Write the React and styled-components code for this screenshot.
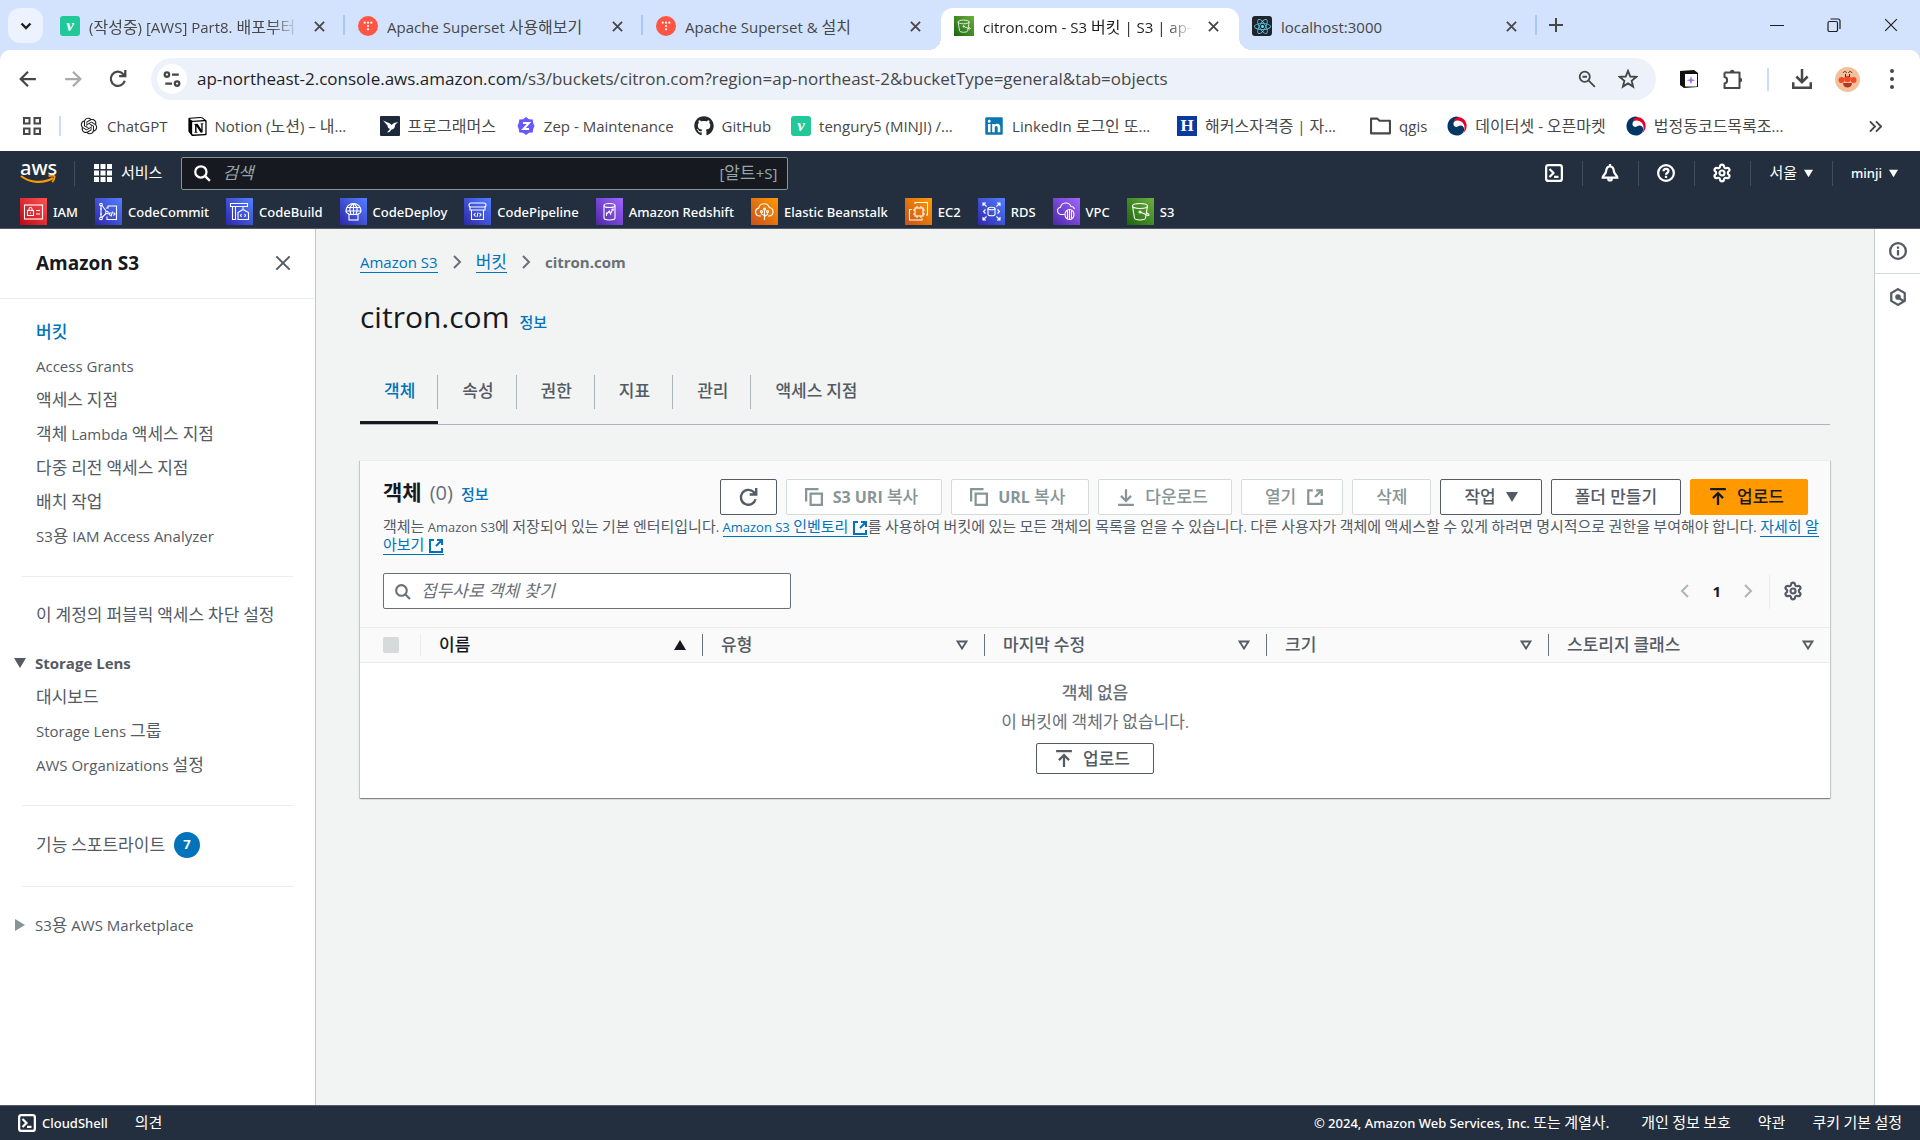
import React, { useState } from 'react'
import styled, { createGlobalStyle, css } from 'styled-components'
import { Settings } from 'lucide-react'
import { FaGithub, FaReact, FaLinkedin } from 'react-icons/fa'
import { SiNotion } from 'react-icons/si'
import { RiOpenaiFill } from 'react-icons/ri'

const HANGUL = /([\uAC00-\uD7A3]+)/

// Hangul is set a little larger than the latin text beside it
const Mixed = ({ children }) => (
    <span>
        {children.split(HANGUL).filter(Boolean).map((part, i) =>
            HANGUL.test(part) ? <Ko key={i}>{part}</Ko> : part
        )}
    </span>
)

const browserTabs = [
    { title: "(작성중) [AWS] Part8. 배포부터", icon: "velog", faded: true },
    { title: "Apache Superset 사용해보기", icon: "tistory" },
    { title: "Apache Superset & 설치", icon: "tistory" },
    { title: "citron.com - S3 버킷 | S3 | ap-", icon: "s3", faded: true, active: true },
    { title: "localhost:3000", icon: "react" },
]

const bookmarks = [
    { title: "ChatGPT", icon: "openai" },
    { title: "Notion (노션) – 내...", icon: "notion", full: true },
    { title: "프로그래머스", icon: "programmers" },
    { title: "Zep - Maintenance", icon: "zep" },
    { title: "GitHub", icon: "github" },
    { title: "tengury5 (MINJI) /...", icon: "velog", full: true },
    { title: "LinkedIn 로그인 또...", icon: "linkedin", full: true },
    { title: "해커스자격증 | 자...", icon: "hackers", full: true },
    { title: "qgis", icon: "folder" },
    { title: "데이터셋 - 오픈마켓", icon: "gov" },
    { title: "법정동코드목록조...", icon: "gov" },
]

const services = [
    { name: "IAM", from: "#bd0816", to: "#ff5252" },
    { name: "CodeCommit", from: "#2e27ad", to: "#527fff" },
    { name: "CodeBuild", from: "#2e27ad", to: "#527fff" },
    { name: "CodeDeploy", from: "#2e27ad", to: "#527fff" },
    { name: "CodePipeline", from: "#2e27ad", to: "#527fff" },
    { name: "Amazon Redshift", from: "#4d27a8", to: "#a166ff" },
    { name: "Elastic Beanstalk", from: "#c8511b", to: "#ff9900" },
    { name: "EC2", from: "#c8511b", to: "#ff9900" },
    { name: "RDS", from: "#2e27ad", to: "#527fff" },
    { name: "VPC", from: "#4d27a8", to: "#a166ff" },
    { name: "S3", from: "#1b660f", to: "#6cae3e" },
]

const bucketLinks = [
    "버킷",
    "Access Grants",
    "액세스 지점",
    "객체 Lambda 액세스 지점",
    "다중 리전 액세스 지점",
    "배치 작업",
    "S3용 IAM Access Analyzer",
]

const lensLinks = ["대시보드", "Storage Lens 그룹", "AWS Organizations 설정"]

const tabs = ["객체", "속성", "권한", "지표", "관리", "액세스 지점"]

const columns = ["이름", "유형", "마지막 수정", "크기", "스토리지 클래스"]

/* ---------- icons ---------- */

const glyphs = {
    IAM: <><rect x="4.5" y="7" width="18" height="14" /><rect x="7.5" y="12.5" width="6" height="5" /><path d="M9 12.500V11a1.500 1.500 0 0 1 3 0v1.500M10.500 14.500v1M16 12.500h4M16 16h4" /></>,
    CodeCommit: <><circle cx="6" cy="6.500" r="1.300" /><circle cx="6" cy="20.500" r="1.300" /><circle cx="12" cy="14.500" r="1.300" /><path d="M6 8v11M7 7.500l4.500 6M7 19.500l4-4M5 11h2M5 16h2M11 10h2V8h8.500v13.500H12v-3M17.500 13.500l-1.500 5M15.500 14.500L14 16l1.500 1.500M18.500 14.500L20 16l-1.500 1.500" /></>,
    CodeBuild: <><path d="M4.500 5.500h17v3h-17zM6.500 8.500v13h3v-13M17 8.500v3M12 21.500v-7l5-3 5.500 3v7zM15.500 16l-1 1.500 1 1.500M18.500 16l1 1.500-1 1.500" /></>,
    CodeDeploy: <><path d="M6 13a7.500 7.500 0 0 1 15 0zM6 13c0 2 2.500 3 4 3.500h7c1.500-.5 4-1.500 4-3.500M13.500 5.500c-3 2-4 5-3.500 7.500l1 3.500M13.500 5.500c3 2 4 5 3.500 7.500l-1 3.500M13.500 5.500v11M7 9.500h13" /><rect x="9" y="16.500" width="9" height="5.500" /></>,
    CodePipeline: <><rect x="5" y="5" width="17" height="4" rx="2" /><path d="M6 9v3h15V9M7.500 12v9.500h12V12M11.500 15L10 16.800l1.500 1.700M15.500 15l1.500 1.800-1.500 1.700M14 14.500l-1 4.500" /></>,
    "Amazon Redshift": <><ellipse cx="13.500" cy="7.500" rx="5.500" ry="2" /><path d="M8 7.500v12.500c0 2.600 11 2.600 11 0V7.500M10.500 18v-3.500M10.500 16l3-3 1 3 2-4.500M15.500 11.500l1.500-.5.5 1.500" /></>,
    "Elastic Beanstalk": <><path d="M10 18H8.500a4 4 0 0 1-.8-7.900 5.500 5.500 0 0 1 10.600-.6A4.300 4.300 0 0 1 18.500 18H17M13.500 22V12M13.500 17.500l-3-1.500v-2M13.500 18.500l3-2v-2" /><circle cx="13.500" cy="11" r="1" /><circle cx="10.500" cy="13.500" r="1" /><circle cx="16.500" cy="13.500" r="1" /></>,
    EC2: <><rect x="10" y="10" width="8" height="8" /><path d="M12 10V8M16 10V8M12 20v-2M16 20v-2M10 12H8M10 16H8M20 12h-2M20 16h-2M10 6V4.500h12.500V17H21M7 11.500H4.500V22h12.500v-1.500" /></>,
    RDS: <><ellipse cx="13.500" cy="10.500" rx="3.500" ry="1.200" /><path d="M10 10.500v6c0 1.600 7 1.600 7 0v-6M5 8V5h3M5 5l3.500 3.500M22 8V5h-3M22 5l-3.500 3.500M5 19v3h3M5 22l3.500-3.500M22 19v3h-3M22 22l-3.500-3.500M7.500 11.500l-2 2 2 2M19.500 11.500l2 2-2 2" /></>,
    VPC: <><path d="M11.500 16.500H8a3.700 3.700 0 0 1-.5-7.300 5.500 5.500 0 0 1 10.500-.7 3.500 3.500 0 0 1 3.500 2.500" /><ellipse cx="16.500" cy="16.500" rx="4.500" ry="5" /><path d="M16.500 11.500v10M14.500 12.500v8M18.500 12.500v8" /></>,
    S3: <><ellipse cx="13" cy="8" rx="7.500" ry="2.500" /><path d="M5.500 8l2 12c.3 2.600 10.700 2.600 11 0l2-12M13 14l8 3.500c1.500.3 1.500-1.500-1-2.500" /><circle cx="13" cy="14" r="1" /></>,
}

const ServiceIcon = ({ service, size = 27 }) => (
    <ServiceTile $from={service.from} $to={service.to} $size={size}>
        <svg viewBox="0 0 27 27" width={size} height={size} fill="none" stroke="#fff" strokeWidth="1.1">
            {glyphs[service.name]}
        </svg>
    </ServiceTile>
)

const Line = ({ size = 18, width = 2, box = 16, children, ...rest }) => (
    <svg width={size} height={size} viewBox={`0 0 ${box} ${box}`} fill="none" stroke="currentColor" strokeWidth={width} aria-hidden="true" {...rest}>
        {children}
    </svg>
)

const CloseIcon = ({ size = 11, width = 2 }) => <Line size={size} width={width} box={12}><path d="M1 1l10 10M11 1L1 11" /></Line>
const SearchIcon = ({ size = 18 }) => <Line size={size}><circle cx="7" cy="7" r="5" /><path d="M11 11l4 4" /></Line>
const ShellIcon = () => <Line><rect x="1" y="1" width="14" height="14" rx="2" /><path d="M4 4.500L7.500 8 4 11.500M8 11.500h4" /></Line>
const BellIcon = () => <Line><path d="M8 0v2M8 2c-2.500 0-3.300 2.500-3.500 4.500C4.300 9 1.500 10 1.500 12h13c0-2-2.800-3-3-5.500C11.300 4.500 10.500 2 8 2zM6.500 12v1.500c0 1.500 3 1.500 3 0V12" /></Line>
const HelpIcon = () => <Line><circle cx="8" cy="8" r="7" /><path d="M5.800 6.500C5.800 3.500 10.200 3.700 10.200 6.300 10.200 8 8 8 8 9.500M8 10.500v2" /></Line>
const GearIcon = () => <Settings size={20} strokeWidth={2.6} aria-hidden="true" />
const InfoIcon = () => <Line><circle cx="8" cy="8" r="7" /><path d="M8 12V7M8 6V4" /></Line>
const HexIcon = () => <Line><path d="M8 1l6 3.500v7L8 15l-6-3.500v-7zM9 9l4.500 3" /><circle cx="8" cy="8" r="1.500" fill="currentColor" /></Line>
const RefreshIcon = ({ size = 18 }) => <Line size={size}><path d="M14 9.500A6.300 6.300 0 1 1 12.500 3.500L14 5M14.500 0v5.500H9" /></Line>
const CopyIcon = () => <Line><path d="M1 12V1h11" /><rect x="5" y="5" width="10" height="10" /></Line>
const DownloadIcon = () => <Line><path d="M1 15h14M8 1v10M3.500 7L8 11.500 12.500 7" /></Line>
const UploadIcon = () => <Line><path d="M1 1h14M8 15V5M3.500 9L8 4.500 12.500 9" /></Line>
const ExternalIcon = ({ size = 16 }) => <Line size={size}><path d="M6 2H2v12h12v-4M9 2h5v5M14 2L8 8" /></Line>
const ChevronIcon = ({ left }) => <Line size={16}><path d={left ? "M11 2L5 8l6 6" : "M5 2l6 6-6 6"} /></Line>
const Caret = ({ size = 12 }) => <svg width={size} height={size} viewBox="0 0 12 12" aria-hidden="true"><path d="M0 1h12L6 11z" fill="currentColor" /></svg>

const SiteIcon = ({ name }) => {
    switch (name) {
        case "velog":
            return <Favicon $bg="#20c997" $radius={3}>v</Favicon>
        case "tistory":
            return (
                <svg width="20" height="20" viewBox="0 0 20 20">
                    <circle cx="10" cy="10" r="10" fill="#ff5544" />
                    <g fill="#fff"><circle cx="6.700" cy="6.700" r="1.100" /><circle cx="10" cy="6.700" r="1.100" /><circle cx="13.300" cy="6.700" r="1.100" /><circle cx="10" cy="10" r="1.100" /><circle cx="10" cy="13.300" r="1.100" /></g>
                </svg>
            )
        case "s3":
            return <ServiceIcon service={services[10]} size={20} />
        case "react":
            return <ReactTile><FaReact size={17} /></ReactTile>
        case "openai":
            return <RiOpenaiFill size={20} color="#222" />
        case "notion":
            return <SiNotion size={19} color="#000" />
        case "programmers":
            return (
                <svg width="20" height="20" viewBox="0 0 20 20">
                    <rect width="20" height="20" rx="1" fill="#1e2a3c" />
                    <path d="M3 4.500l7 3 1.500 1.500 2.500-2 4-1-3 3c0 3.500-2 4.500-3.500 4.500L9.500 16 7 16.500l3-3.500c-2-1-2.500-2-2.500-3.500z" fill="#fff" />
                </svg>
            )
        case "zep":
            return (
                <svg width="20" height="20" viewBox="0 0 20 20">
                    <path d="M10 1l3 2.200 3.700.3.600 3.700 1.200 2.800-1.200 2.800-.6 3.700-3.700.3L10 19l-3-2.200-3.700-.3-.6-3.700L1.500 10l1.200-2.800.6-3.700L7 3.200z" fill="#6758ff" />
                    <path d="M7 7h6l-5.500 6H13" fill="none" stroke="#fff" strokeWidth="2" />
                </svg>
            )
        case "github":
            return <FaGithub size={20} color="#24292f" />
        case "linkedin":
            return <FaLinkedin size={20} color="#0a76b4" />
        case "hackers":
            return <Favicon $bg="#0b3a9e" $upright>H</Favicon>
        case "folder":
            return <Line size={21} width={2} box={20}><path d="M1 16.500v-14h6l2 2h10v12z" strokeLinejoin="round" /></Line>
        default:
            return (
                <svg width="20" height="20" viewBox="0 0 20 20">
                    <path d="M10 .5C4.500.5.500 4.800.5 10.300S4.800 19.500 10 19.500c4 0 7.200-2.700 7.200-6.300 0-3.200-3.400-4.900-6-3-2.700 2-5.700-.6-4.400-3.900C7.800 3.900 10.200 3 12.700 3.200 12.300 1.600 11.500.5 10 .5z" fill="#003764" />
                    <path d="M7.500 3C11.500-.5 17 1.500 19 6.500c1.500 4 .2 8-2.500 10.500 1.500-4 1.500-8-1-10.500C13.200 4.200 10 3.800 7 5.500z" fill="#e4002b" />
                </svg>
            )
    }
}

/* ---------- browser ---------- */

const Browser = () => (
    <header>
        <TabStrip>
            <TabSearch type="button" aria-label="탭 검색">
                <Line size={12} width={2.4} box={12}><path d="M1.500 3.500L6 8l4.500-4.500" /></Line>
            </TabSearch>
            {browserTabs.map((tab, i) => (
                <BrowserTab key={i} $active={tab.active} $divider={!tab.active && i !== 2}>
                    <SiteIcon name={tab.icon} />
                    <TabTitle $faded={tab.faded}><Mixed>{tab.title}</Mixed></TabTitle>
                    <BareButton type="button" aria-label="탭 닫기"><CloseIcon /></BareButton>
                </BrowserTab>
            ))}
            <NewTab type="button" aria-label="새 탭"><Line size={14} box={14}><path d="M7 0v14M0 7h14" /></Line></NewTab>
            <WindowButtons>
                <BareButton type="button" aria-label="최소화"><Line size={14} width={1} box={14}><path d="M0 7.500h14" /></Line></BareButton>
                <BareButton type="button" aria-label="복원"><Line size={14} width={1.2} box={14}><rect x="1" y="3.500" width="9.500" height="10" rx="1.500" /><path d="M3.500 1h7.500a2 2 0 0 1 2 2v8" /></Line></BareButton>
                <BareButton type="button" aria-label="닫기"><CloseIcon size={14} width={1} /></BareButton>
            </WindowButtons>
        </TabStrip>
        <Toolbar>
            <BareButton type="button" aria-label="뒤로"><Line><path d="M15 8H2M8 1.500L1.500 8 8 14.500" /></Line></BareButton>
            <BareButton type="button" aria-label="앞으로" $color="#a8a9aa"><Line><path d="M1 8h13M8 1.500L14.500 8 8 14.500" /></Line></BareButton>
            <BareButton type="button" aria-label="새로고침"><RefreshIcon /></BareButton>
            <Omnibox>
                <SiteInfo type="button" aria-label="사이트 정보">
                    <Line><circle cx="3.500" cy="4" r="2" /><path d="M8 4h6M2 12h6" /><circle cx="12.500" cy="12" r="2" /></Line>
                </SiteInfo>
                <Url><b>ap-northeast-2.console.aws.amazon.com</b>/s3/buckets/citron.com?region=ap-northeast-2&amp;bucketType=general&amp;tab=objects</Url>
                <BareButton type="button" aria-label="확대/축소"><Line width={1.6}><circle cx="6" cy="6" r="4.500" /><path d="M9.500 9.500l5.500 5.500M4 6h4" /></Line></BareButton>
                <BareButton type="button" aria-label="북마크 추가"><Line size={20} width={1.5}><path d="M8 1.500l1.800 4.500 4.800.3-3.700 3.100 1.200 4.700L8 11.500l-4.100 2.600 1.200-4.700L1.400 6.300 6.200 6z" /></Line></BareButton>
            </Omnibox>
            <Extensions>
                <BareButton type="button" aria-label="확장 프로그램">
                    <svg width="20" height="20" viewBox="0 0 20 20">
                        <path d="M1 2l14-1 4 3v14l-14 1-4-3z" fill="#111" />
                        <rect x="6" y="5" width="12" height="12.500" fill="#fff" />
                        <path d="M12 7l1 3.200 3.200 1-3.200 1-1 3.200-1-3.200-3.200-1 3.200-1z" fill="#a66bf2" />
                    </svg>
                </BareButton>
                <BareButton type="button" aria-label="확장 프로그램 관리"><Line size={22} width={2} box={22}><path d="M2.500 4.500h6M2.500 4.500v4.500c3.500.5 3.500 6 0 6.500v4.500H17.500V4.500h-9" strokeLinejoin="round" /><path d="M8 4a2.200 2.200 0 0 1 4.400 0zM18 9.800a2.200 2.200 0 0 1 0 4.400z" fill="currentColor" stroke="none" /></Line></BareButton>
                <Rule $color="#c9dcfb" $height={23} />
                <BareButton type="button" aria-label="다운로드"><Line size={20}><path d="M8 0v10M3.500 6L8 10.500 12.500 6M1 10.500V15h14v-4.500" /></Line></BareButton>
                <BareButton type="button" aria-label="프로필">
                    <svg width="25" height="25" viewBox="0 0 25 25">
                        <circle cx="12.500" cy="12.500" r="12.500" fill="#f3c09c" />
                        <g fill="#ee4b2b"><circle cx="12.500" cy="12" r="3.300" /><circle cx="6.500" cy="13" r="3" /><circle cx="18.500" cy="13" r="3" /></g>
                        <path d="M8 16h9c0 6-9 6-9 0z" fill="#b5342a" />
                        <path d="M8 6c1-2 3-2 3.500 0M13.500 6c.5-2 2.500-2 3.500 0M10.500 7v3M14.500 7v3" stroke="#4a2a20" fill="none" />
                    </svg>
                </BareButton>
                <BareButton type="button" aria-label="메뉴"><svg width="18" height="20" viewBox="0 0 18 20" fill="currentColor"><circle cx="9" cy="2" r="2" /><circle cx="9" cy="10" r="2" /><circle cx="9" cy="18" r="2" /></svg></BareButton>
            </Extensions>
        </Toolbar>
        <BookmarkBar>
            <BareButton type="button" aria-label="앱">
                <Line size={18} width={2} box={18}><path d="M1 1h5.500v5.500H1zM11.500 1H17v5.500h-5.500zM1 11.500h5.500V17H1zM11.500 11.500H17V17h-5.500z" /></Line>
            </BareButton>
            <Rule $color="#c9dcfb" $height={20} />
            <BookmarkList>
                {bookmarks.map(item => (
                    <Bookmark key={item.title} href="#">
                        <SiteIcon name={item.icon} />
                        <BookmarkTitle $full={item.full}><Mixed>{item.title}</Mixed></BookmarkTitle>
                    </Bookmark>
                ))}
            </BookmarkList>
            <BareButton type="button" aria-label="더보기"><Line size={13} width={2} box={14}><path d="M1 1.500L6.500 7 1 12.500M7.500 1.500L13 7l-5.500 5.500" /></Line></BareButton>
        </BookmarkBar>
    </header>
)

/* ---------- console ---------- */

const ConsoleHeader = () => (
    <ConsoleBar>
        <ConsoleTop>
            <Logo href="#" aria-label="AWS">
                aws
                <svg width="36" height="10" viewBox="0 0 36 10"><path d="M1 1c9 7 22 8 32 2" fill="none" stroke="#ff9900" strokeWidth="2.2" /><path d="M28.500 1.200c3-.9 5-.8 6 0 .3 1.800-.5 4-2.300 6" fill="none" stroke="#ff9900" strokeWidth="1.700" /></svg>
            </Logo>
            <Rule $color="#414d5c" $height={25} />
            <ServicesButton type="button">
                <svg width="18" height="18" viewBox="0 0 18 18" fill="#fff"><path d="M0 0h5v5H0zM6.500 0h5v5h-5zM13 0h5v5h-5zM0 6.500h5v5H0zM6.500 6.500h5v5h-5zM13 6.500h5v5h-5zM0 13h5v5H0zM6.500 13h5v5h-5zM13 13h5v5h-5z" /></svg>
                <Mixed>서비스</Mixed>
            </ServicesButton>
            <ConsoleSearch>
                <SearchIcon />
                <input type="search" placeholder="검색" />
                <SearchHint><Mixed>[알트+S]</Mixed></SearchHint>
            </ConsoleSearch>
            <ConsoleTools>
                <ToolButton type="button" aria-label="CloudShell"><ShellIcon /></ToolButton>
                <ToolButton type="button" aria-label="알림"><BellIcon /></ToolButton>
                <ToolButton type="button" aria-label="지원"><HelpIcon /></ToolButton>
                <ToolButton type="button" aria-label="설정" $wide><GearIcon /></ToolButton>
                <ToolButton type="button" aria-haspopup="menu"><Mixed>서울</Mixed><Caret size={9} /></ToolButton>
                <ToolButton type="button" aria-haspopup="menu">minji<Caret size={9} /></ToolButton>
            </ConsoleTools>
        </ConsoleTop>
        <Favorites>
            {services.map(service => (
                <a key={service.name} href="#">
                    <ServiceIcon service={service} />
                    {service.name}
                </a>
            ))}
        </Favorites>
    </ConsoleBar>
)

const Sidebar = () => (
    <Side>
        <SideHeader>
            <h2>Amazon S3</h2>
            <BareButton type="button" aria-label="탐색 닫기" $color="#545b64"><CloseIcon size={16} width={1.5} /></BareButton>
        </SideHeader>
        <SideNav>
            <NavList>
                {bucketLinks.map((name, i) => (
                    <li key={name}><NavLink href="#" $active={i === 0}><Mixed>{name}</Mixed></NavLink></li>
                ))}
            </NavList>
            <NavDivider />
            <NavLink href="#"><Mixed>이 계정의 퍼블릭 액세스 차단 설정</Mixed></NavLink>
            <NavGroup type="button" aria-expanded="true" $open><Caret size={12} /><b>Storage Lens</b></NavGroup>
            <NavList>
                {lensLinks.map(name => (
                    <li key={name}><NavLink href="#"><Mixed>{name}</Mixed></NavLink></li>
                ))}
            </NavList>
            <NavDivider />
            <NavLink href="#"><Mixed>기능 스포트라이트</Mixed><Badge>7</Badge></NavLink>
            <NavDivider />
            <NavGroup type="button" aria-expanded="false">
                <svg width="12" height="12" viewBox="0 0 12 12"><path d="M1 0v12l10-6z" fill="#879596" /></svg>
                <Mixed>S3용 AWS Marketplace</Mixed>
            </NavGroup>
        </SideNav>
    </Side>
)

const ObjectsPanel = () => (
    <Card>
        <CardHeader>
            <TitleRow>
                <CardTitle>
                    <h2><Mixed>객체</Mixed></h2>
                    <Count>(0)</Count>
                    <InfoLink href="#"><Mixed>정보</Mixed></InfoLink>
                </CardTitle>
                <Actions>
                    <Button type="button" aria-label="새로고침" $iconOnly><RefreshIcon size={19} /></Button>
                    <Button type="button" disabled $icon><CopyIcon /><Mixed>S3 URI 복사</Mixed></Button>
                    <Button type="button" disabled $icon><CopyIcon /><Mixed>URL 복사</Mixed></Button>
                    <Button type="button" disabled $icon><DownloadIcon /><Mixed>다운로드</Mixed></Button>
                    <Button type="button" disabled $iconRight><Mixed>열기</Mixed><ExternalIcon size={18} /></Button>
                    <Button type="button" disabled><Mixed>삭제</Mixed></Button>
                    <Button type="button" aria-haspopup="menu"><Mixed>작업</Mixed><Caret size={12} /></Button>
                    <Button type="button"><Mixed>폴더 만들기</Mixed></Button>
                    <Button type="button" $icon $primary><UploadIcon /><Mixed>업로드</Mixed></Button>
                </Actions>
            </TitleRow>
            <Description>
                <Mixed>객체는 Amazon S3에 저장되어 있는 기본 엔터티입니다. </Mixed>
                <a href="#"><Mixed>Amazon S3 인벤토리 </Mixed><ExternalIcon /></a>
                <Mixed>를 사용하여 버킷에 있는 모든 객체의 목록을 얻을 수 있습니다. 다른 사용자가 객체에 액세스할 수 있게 하려면 명시적으로 권한을 부여해야 합니다. </Mixed>
                <a href="#"><Mixed>자세히 알아보기 </Mixed><ExternalIcon /></a>
            </Description>
            <FilterRow>
                <Filter>
                    <SearchIcon size={17} />
                    <input type="search" aria-label="객체 찾기" placeholder="접두사로 객체 찾기" />
                </Filter>
                <Pager>
                    <BareButton type="button" disabled aria-label="이전 페이지" $color="#aab7b8"><ChevronIcon left /></BareButton>
                    <b>1</b>
                    <BareButton type="button" disabled aria-label="다음 페이지" $color="#aab7b8"><ChevronIcon /></BareButton>
                </Pager>
                <Rule $color="#eaeded" $height={35} />
                <Preferences>
                    <BareButton type="button" aria-label="기본 설정" $color="#545b64"><GearIcon /></BareButton>
                </Preferences>
            </FilterRow>
        </CardHeader>
        <Table>
            <thead>
                <tr>
                    <SelectCell><input type="checkbox" disabled aria-label="모두 선택" /></SelectCell>
                    {columns.map((name, i) => (
                        <HeadCell key={name} $sorted={i === 0}>
                            <div>
                                <Mixed>{name}</Mixed>
                                {i === 0
                                    ? <svg width="12" height="12" viewBox="0 0 12 12"><path d="M0 11h12L6 1z" fill="#16191f" /></svg>
                                    : <Line size={12} width={1.8} box={12}><path d="M1.500 2.500h9L6 9.500z" /></Line>}
                            </div>
                        </HeadCell>
                    ))}
                </tr>
            </thead>
            <tbody>
                <tr>
                    <EmptyCell colSpan={6}>
                        <b><Mixed>객체 없음</Mixed></b>
                        <p><Mixed>이 버킷에 객체가 없습니다.</Mixed></p>
                        <Button type="button" $icon $small><UploadIcon /><Mixed>업로드</Mixed></Button>
                    </EmptyCell>
                </tr>
            </tbody>
        </Table>
    </Card>
)

const App = () => {
    const [activeTab, setActiveTab] = useState(0)

    return (
        <Page>
            <GlobalStyle />
            <Browser />
            <ConsoleHeader />
            <Body>
                <Sidebar />
                <Main>
                    <Breadcrumbs aria-label="이동 경로">
                        <a href="#">Amazon S3</a>
                        <ChevronIcon />
                        <a href="#"><Mixed>버킷</Mixed></a>
                        <ChevronIcon />
                        <b>citron.com</b>
                    </Breadcrumbs>
                    <Heading>
                        <h1>citron.com</h1>
                        <InfoLink href="#"><Mixed>정보</Mixed></InfoLink>
                    </Heading>
                    <Tabs role="tablist">
                        {tabs.map((name, i) => (
                            <Tab
                                key={name}
                                type="button"
                                role="tab"
                                aria-selected={i === activeTab}
                                $active={i === activeTab}
                                onClick={() => setActiveTab(i)}>
                                <TabLabel><Mixed>{name}</Mixed></TabLabel>
                            </Tab>
                        ))}
                    </Tabs>
                    <ObjectsPanel />
                </Main>
                <ToolPanel>
                    <button type="button" aria-label="정보"><InfoIcon /></button>
                    <button type="button" aria-label="튜토리얼"><HexIcon /></button>
                </ToolPanel>
            </Body>
            <Footer>
                <a href="#"><ShellIcon />CloudShell</a>
                <a href="#"><Mixed>의견</Mixed></a>
                <Copyright><Mixed>© 2024, Amazon Web Services, Inc. 또는 계열사.</Mixed></Copyright>
                <a href="#"><Mixed>개인 정보 보호</Mixed></a>
                <a href="#"><Mixed>약관</Mixed></a>
                <a href="#"><Mixed>쿠키 기본 설정</Mixed></a>
            </Footer>
        </Page>
    )
}

export default App

const GlobalStyle = createGlobalStyle`
    * {
        box-sizing: border-box;
    }

    body {
        --ko-step: 2px;
        margin: 0;
        color: #16191f;
        font-family: "Open Sans", "Noto Sans CJK KR", sans-serif;
        font-size: 15px;
        line-height: 24px;
    }

    a {
        color: inherit;
        text-decoration: none;
    }

    button, input {
        font: inherit;
        color: inherit;
    }

    button {
        cursor: pointer;
    }

    svg {
        flex: none;
        display: block;
    }

    h1, h2, p, ul {
        margin: 0;
        padding: 0;
    }

    input[type="search"] {
        appearance: none;
        flex: 1;
        min-width: 0;
        padding: 0;
        border: none;
        outline: none;
        background: none;
        font-size: 17px;

        &::placeholder {
            color: inherit;
            font-style: italic;
            opacity: 1;
        }
    }
`

const Ko = styled.span`
    font-size: calc(1em + var(--ko-step));
    font-weight: var(--ko-weight, inherit);
    line-height: 1;
`

const Page = styled.div`
    min-height: 100vh;
    display: flex;
    flex-direction: column;
`

const BareButton = styled.button`
    display: flex;
    align-items: center;
    justify-content: center;
    padding: 0;
    border: none;
    background: none;
    color: ${({ $color }) => $color || "#474747"};
`

const Rule = styled.span`
    flex: none;
    width: ${({ $height }) => ($height < 24 ? 2 : 1)}px;
    height: ${({ $height }) => $height}px;
    background-color: ${({ $color }) => $color};
`

const TabStrip = styled.div`
    --ko-step: 1px;
    display: flex;
    align-items: flex-end;
    height: 50px;
    padding-left: 8px;
    background-color: #d3e3fd;
`

const TabSearch = styled.button`
    display: flex;
    align-items: center;
    justify-content: center;
    width: 35px;
    height: 35px;
    margin: 0 4px 7px 0;
    padding: 0;
    border: none;
    border-radius: 12px;
    background-color: #ecf3fe;
    color: #1f1f1f;
`

const BrowserTab = styled.div`
    position: relative;
    display: flex;
    align-items: center;
    gap: 9px;
    width: 298px;
    height: 42px;
    padding: 0 20px 6px 13px;
    color: #474747;

    ${({ $divider }) => $divider && css`
        &:after {
            content: "";
            position: absolute;
            top: 7px;
            right: 0;
            width: 2px;
            height: 20px;
            background-color: #a8c7fa;
        }
    `}

    ${({ $active }) => $active && css`
        border-radius: 12px 12px 0 0;
        background-color: #fff;
        color: #1f1f1f;

        &:before, &:after {
            content: "";
            position: absolute;
            bottom: 0;
            width: 12px;
            height: 12px;
        }

        &:before {
            left: -12px;
            background: radial-gradient(circle at 0 0, transparent 12px, #fff 12px);
        }

        &:after {
            right: -12px;
            background: radial-gradient(circle at 100% 0, transparent 12px, #fff 12px);
        }
    `}
`

const TabTitle = styled.span`
    flex: 1;
    margin-right: 6px;
    padding-top: 2px;
    overflow: hidden;
    white-space: nowrap;
    ${({ $faded }) => $faded && "mask-image: linear-gradient(to left, transparent, #000 28px);"}
`

const NewTab = styled(BareButton)`
    width: 38px;
    height: 50px;
    padding-bottom: 1px;
`

const WindowButtons = styled.div`
    display: flex;
    gap: 43px;
    height: 50px;
    margin-left: auto;
    padding-right: 22px;

    button {
        color: #1f1f1f;
    }
`

const Toolbar = styled.div`
    display: flex;
    align-items: center;
    gap: 27px;
    padding: 8px 19px;
    border-radius: 10px 10px 0 0;
    box-shadow: 0 -10px 0 #d3e3fd;
    background-color: #fff;
`

const Omnibox = styled.div`
    flex: 1;
    display: flex;
    align-items: center;
    gap: 22px;
    height: 42px;
    margin: 0 -4px 0 -3px;
    padding: 0 18px 0 6px;
    border-radius: 21px;
    background-color: #ecf1fa;
`

const SiteInfo = styled(BareButton)`
    width: 30px;
    height: 30px;
    margin-right: -12px;
    border-radius: 15px;
    background-color: #fff;
`

const Url = styled.span`
    flex: 1;
    font-size: 17px;
    color: #474747;

    b {
        font-weight: 400;
        color: #1f1f1f;
    }
`

const Extensions = styled.div`
    display: flex;
    align-items: center;
    gap: 23px;
`

const BookmarkBar = styled.div`
    --ko-step: 1px;
    display: flex;
    align-items: center;
    gap: 18px;
    height: 43px;
    padding: 0 38px 7px 23px;
    background-color: #fff;
`

const BookmarkList = styled.div`
    flex: 1;
    display: flex;
    gap: 20px;
    min-width: 0;
    color: #474747;
`

const Bookmark = styled.a`
    display: flex;
    align-items: center;
    gap: 8px;
    white-space: nowrap;
`

const BookmarkTitle = styled.span`
    ${({ $full }) => $full && "width: 145px;"}
`

const Favicon = styled.span`
    flex: none;
    width: 20px;
    height: 20px;
    border-radius: ${({ $radius }) => $radius || 0}px;
    background-color: ${({ $bg }) => $bg};
    color: #fff;
    font-family: "Liberation Serif", serif;
    font-size: 17px;
    font-style: ${({ $upright }) => ($upright ? "normal" : "italic")};
    font-weight: 700;
    line-height: 20px;
    text-align: center;
`

const ReactTile = styled.span`
    flex: none;
    display: flex;
    align-items: center;
    justify-content: center;
    width: 20px;
    height: 20px;
    border-radius: 3px;
    background-color: #20232a;
    color: #61dafb;
`

const ServiceTile = styled.span`
    flex: none;
    width: ${({ $size }) => $size}px;
    height: ${({ $size }) => $size}px;
    background-image: linear-gradient(45deg, ${({ $from, $to }) => `${$from}, ${$to}`});
`

const ConsoleBar = styled.div`
    border-bottom: 1px solid #545b64;
    background-color: #232f3e;
    color: #fff;
    font-family: "Noto Sans", "Noto Sans CJK KR", sans-serif;
    font-size: 13px;
    font-weight: 500;
    --ko-weight: 400;
`

const ConsoleTop = styled.div`
    display: flex;
    align-items: center;
    height: 44px;
    padding: 0 20px;
`

const Logo = styled.a`
    width: 36px;
    margin-right: 18px;
    font-size: 20px;
    line-height: 14px;
    text-align: center;
`

const ServicesButton = styled.button`
    display: flex;
    align-items: center;
    gap: 9px;
    margin: 0 19px;
    padding: 0;
    border: none;
    background: none;
`

const ConsoleSearch = styled.label`
    flex: 0 1 607px;
    display: flex;
    align-items: center;
    gap: 11px;
    height: 33px;
    padding: 0 10px 0 11px;
    border: 1px solid #879596;
    border-radius: 2px;
    background-color: #16191f;
    font-weight: 400;

    input {
        color: #95a5a6;
    }
`

const SearchHint = styled.span`
    font-size: 15px;
    color: #95a5a6;
`

const ConsoleTools = styled.div`
    display: flex;
    align-items: center;
    margin: 0 -17px 0 auto;
`

const ToolButton = styled.button`
    display: flex;
    align-items: center;
    gap: 7px;
    height: 25px;
    padding: ${({ $wide }) => ($wide ? "0 18px 0 17px" : "0 19px 0 18px")};
    border: none;
    background: none;

    & + & {
        border-left: 1px solid #414d5c;
    }
`

const Favorites = styled.nav`
    display: flex;
    gap: 17px;
    padding: 3px 20px;

    a {
        display: flex;
        align-items: center;
        gap: 6px;
        white-space: nowrap;
    }
`

const Body = styled.div`
    flex: 1;
    display: flex;
    background-color: #f2f3f3;
`

const Side = styled.aside`
    flex: none;
    width: 316px;
    border-right: 1px solid #c6cacb;
    background-color: #fff;
    color: #545b64;
`

const SideHeader = styled.div`
    display: flex;
    align-items: center;
    justify-content: space-between;
    height: 70px;
    padding: 0 24px 2px 36px;
    border-bottom: 1px solid #eaeded;

    h2 {
        font-size: 19px;
        color: #16191f;
    }
`

const SideNav = styled.nav`
    padding: 21px 22px 22px;
`

const NavList = styled.ul`
    list-style: none;
    display: flex;
    flex-direction: column;
    gap: 10px;
`

const NavLink = styled.a`
    display: flex;
    align-items: center;
    min-height: 24px;
    padding-left: 14px;
    white-space: nowrap;
    ${({ $active }) => $active && "color: #0073bb; font-weight: 500;"}
`

const NavDivider = styled.hr`
    margin: 28px 0 26px;
    border: none;
    border-top: 1px solid #eaeded;
`

const NavGroup = styled.button`
    display: flex;
    align-items: center;
    gap: 9px;
    margin-left: -8px;
    padding: 0;
    border: none;
    background: none;
    white-space: nowrap;
    ${({ $open }) => $open && "margin-top: 24px; margin-bottom: 10px;"}
`

const Badge = styled.span`
    width: 26px;
    height: 26px;
    margin-left: 9px;
    border-radius: 13px;
    background-color: #0073bb;
    color: #fff;
    font-size: 13px;
    font-weight: 700;
    text-align: center;
`

const Main = styled.main`
    flex: 1;
    min-width: 0;
    padding: 21px 44px 45px;
`

const Breadcrumbs = styled.nav`
    display: flex;
    align-items: center;
    gap: 11px;
    color: #687078;

    a {
        border-bottom: 1px solid #0073bb;
        color: #0073bb;
        line-height: 20px;
    }
`

const Heading = styled.div`
    display: flex;
    align-items: baseline;
    gap: 10px;
    margin-top: 23px;

    h1 {
        font-size: 30px;
        font-weight: 400;
        line-height: 40px;
    }
`

const InfoLink = styled.a`
    --ko-weight: 500;
    color: #0073bb;
    font-size: 13px;
    font-weight: 700;
`

const Tabs = styled.div`
    display: flex;
    margin: 38px 0 35px;
    border-bottom: 1px solid #aab7b8;
`

const Tab = styled.button`
    --ko-weight: 500;
    padding: 0 0 12px;
    border: none;
    border-bottom: 3px solid ${({ $active }) => ($active ? "#16191f" : "transparent")};
    background: none;
    color: ${({ $active }) => ($active ? "#0073bb" : "#545b64")};
    font-weight: 700;
    white-space: nowrap;
`

const TabLabel = styled.span`
    display: block;
    padding: 4px 22px 6px 24px;
    border-right: 1px solid #aab7b8;

    ${Tab}:last-child & {
        border-right: none;
    }
`

const Card = styled.section`
    border-top: 1px solid #eaeded;
    background-color: #fff;
    box-shadow: 0 1px 1px 0 rgba(0, 28, 36, 0.3), 1px 1px 1px 0 rgba(0, 28, 36, 0.15), -1px 1px 1px 0 rgba(0, 28, 36, 0.15);
`

const CardHeader = styled.div`
    padding: 18px 22px 18px 23px;
    border-bottom: 1px solid #eaeded;
    background-color: #fafafa;
`

const TitleRow = styled.div`
    display: flex;
    justify-content: space-between;
`

const CardTitle = styled.div`
    display: flex;
    align-items: baseline;
    gap: 8px;
    padding-top: 2px;

    h2 {
        font-size: 19px;
    }
`

const Count = styled.span`
    color: #687078;
    font-size: 20px;
`

const Actions = styled.div`
    display: flex;
    gap: 9px;
`

const Button = styled.button`
    --ko-step: 1px;
    --ko-weight: 500;
    display: inline-flex;
    align-items: center;
    gap: 10px;
    height: ${({ $small }) => ($small ? 31 : 36)}px;
    padding: 0 ${({ $iconRight, $iconOnly }) => ($iconRight || $iconOnly ? 18 : 23)}px 0 ${({ $icon, $iconOnly }) => ($icon || $iconOnly ? 18 : 23)}px;
    border: 1px solid #545b64;
    border-radius: 2px;
    background-color: #fff;
    color: #545b64;
    font-size: 16px;
    font-weight: 700;
    white-space: nowrap;

    &:disabled {
        border-color: #d5dbdb;
        color: #879596;
        cursor: default;
    }

    ${({ $primary }) => $primary && css`
        border-color: #ff9900;
        background-color: #ff9900;
        color: #16191f;
    `}
`

const Description = styled.p`
    margin: 3px -16px 0 0;
    color: #545b64;
    font-size: 13px;
    line-height: 18px;

    a {
        border-bottom: 1px solid #0073bb;
        color: #0073bb;
    }

    svg {
        display: inline-block;
        vertical-align: -4px;
    }
`

const FilterRow = styled.div`
    display: flex;
    align-items: center;
    margin-top: 19px;
`

const Filter = styled.label`
    flex: 0 1 408px;
    display: flex;
    align-items: center;
    gap: 10px;
    height: 36px;
    margin-right: auto;
    padding: 0 10px;
    border: 1px solid #687078;
    border-radius: 2px;
    background-color: #fff;
    color: #687078;
`

const Pager = styled.div`
    display: flex;
    align-items: center;
    gap: 19px;
    margin-right: 13px;
`

const Preferences = styled.div`
    padding: 0 5px 0 13px;
`

const Table = styled.table`
    width: 100%;
    table-layout: fixed;
    border-collapse: collapse;
`

const SelectCell = styled.th`
    width: 60px;
    padding: 0;
    border-bottom: 1px solid #eaeded;
    background-color: #fafafa;

    input {
        appearance: none;
        display: block;
        width: 16px;
        height: 16px;
        margin: 0 0 0 23px;
        border-radius: 2px;
        background-color: #d5dbdb;
    }
`

const HeadCell = styled.th`
    --ko-weight: 500;
    padding: 6px 0;
    border-bottom: 1px solid #eaeded;
    background-color: #fafafa;
    color: ${({ $sorted }) => ($sorted ? "#16191f" : "#545b64")};
    text-align: left;

    > div {
        display: flex;
        align-items: center;
        justify-content: space-between;
        height: 22px;
        padding: 0 16px 0 18px;
        border-left: 1px solid ${({ $sorted }) => ($sorted ? "#eaeded" : "#687078")};
        white-space: nowrap;
    }
`

const EmptyCell = styled.td`
    padding: 18px 0 24px;
    color: #687078;
    text-align: center;

    b {
        --ko-weight: 500;
    }

    p {
        margin: 5px 0 9px;
    }
`

const ToolPanel = styled.aside`
    flex: none;
    width: 46px;
    border-left: 1px solid #c6cacb;
    background-color: #fff;

    button {
        display: flex;
        align-items: center;
        justify-content: center;
        width: 100%;
        height: 45px;
        padding: 0;
        border: none;
        background: none;
        color: #545b64;
    }

    button:first-child {
        border-bottom: 1px solid #d5dbdb;
    }
`

const Footer = styled.footer`
    display: flex;
    align-items: center;
    gap: 27px;
    height: 35px;
    padding: 0 18px;
    border-top: 1px solid #545b64;
    background-color: #232f3e;
    color: #fff;
    font-family: "Noto Sans", "Noto Sans CJK KR", sans-serif;
    font-size: 13px;
    font-weight: 500;
    --ko-weight: 400;

    a {
        display: flex;
        align-items: center;
        gap: 6px;
        white-space: nowrap;
    }
`

const Copyright = styled.span`
    margin: 0 5px 0 auto;
`
